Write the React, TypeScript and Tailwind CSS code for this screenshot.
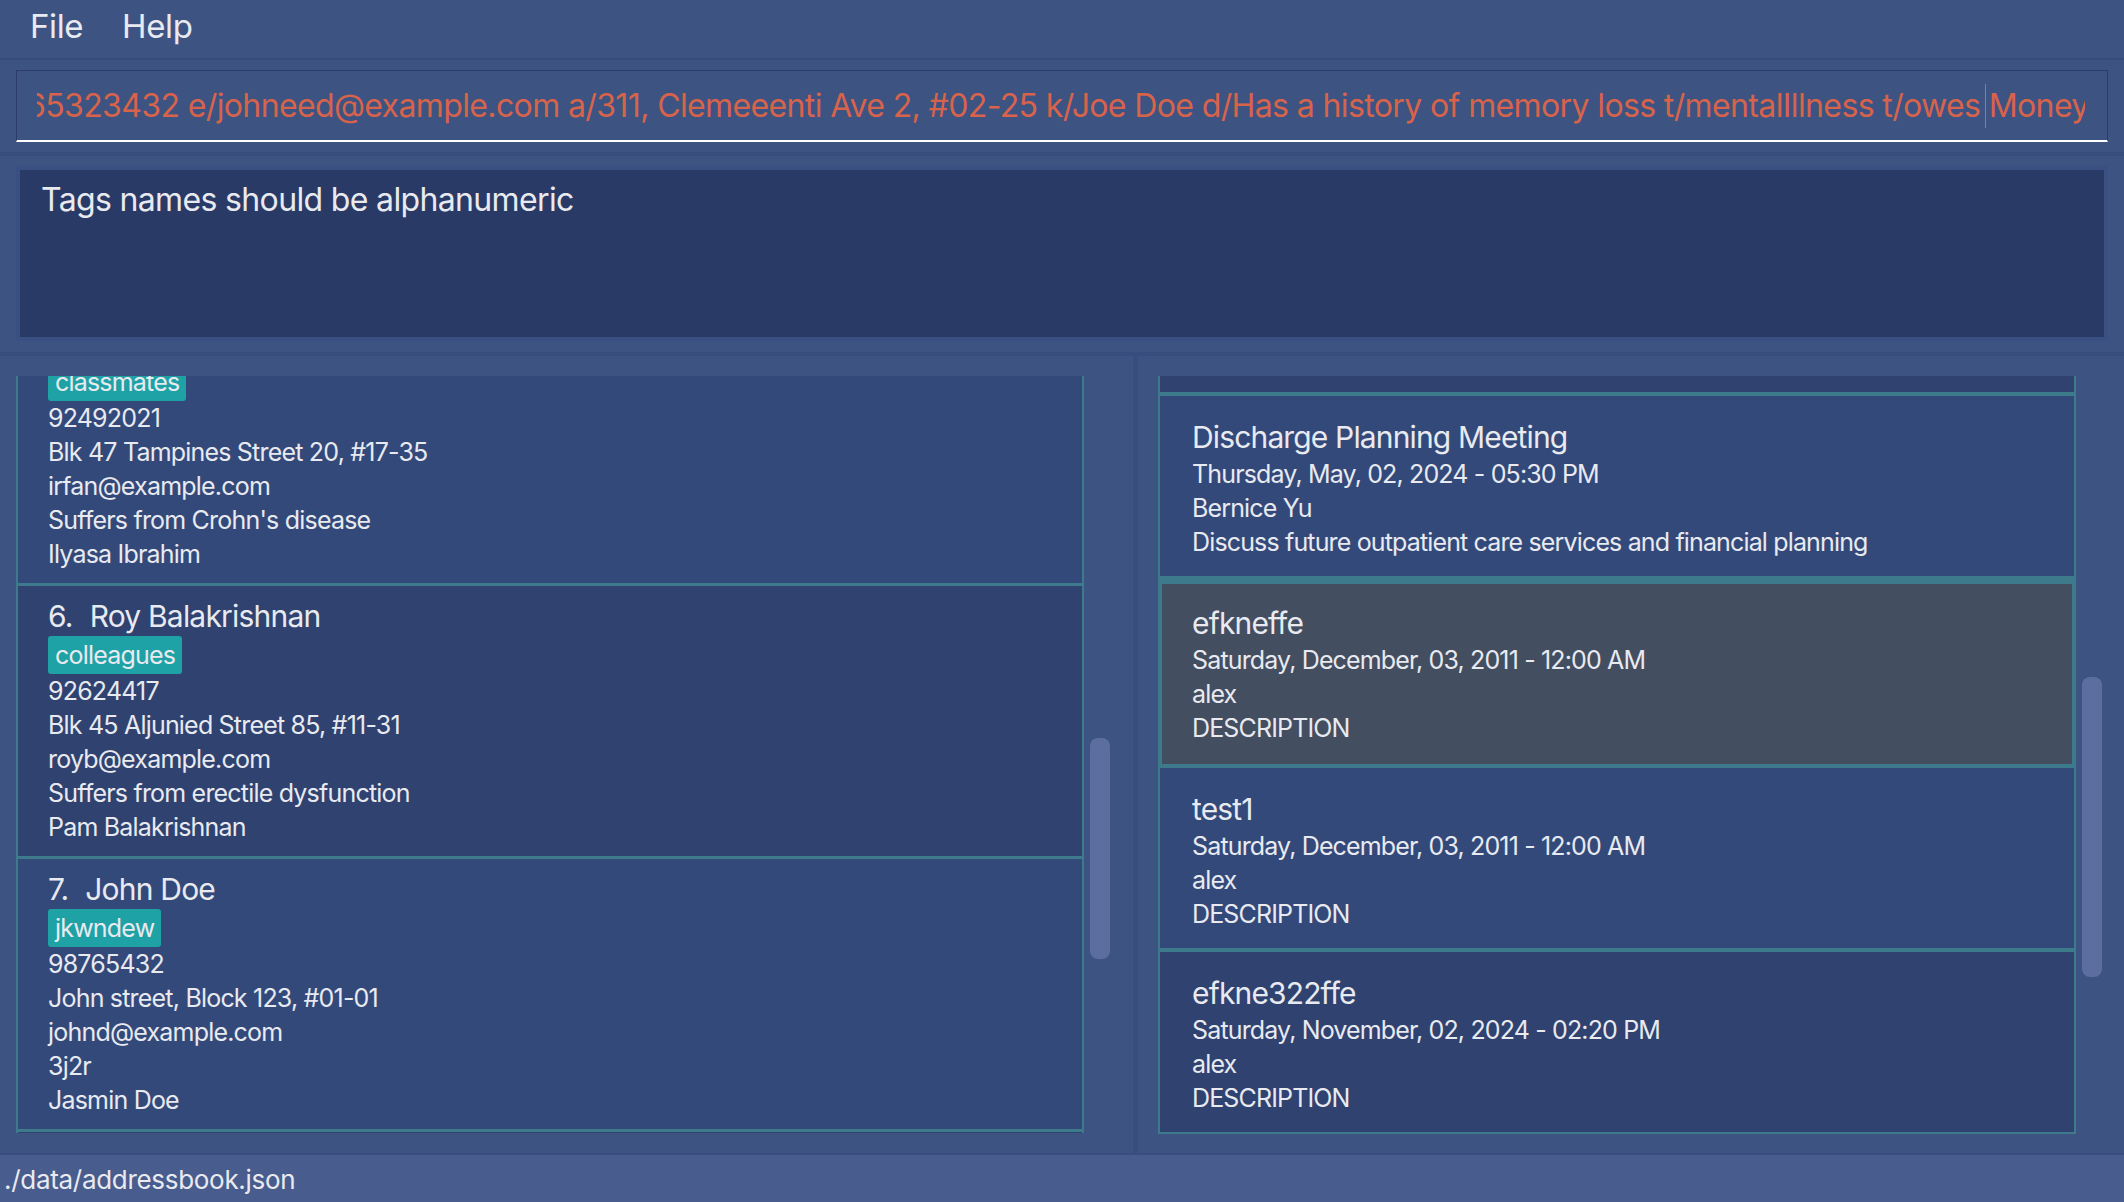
import type { ReactNode } from "react";

type Person = {
  id: number;
  name: string;
  tag: string;
  lines: string[];
};

const people: Person[] = [
  {
    id: 5,
    name: "Irfan Ibrahim",
    tag: "classmates",
    lines: [
      "92492021",
      "Blk 47 Tampines Street 20, #17-35",
      "irfan@example.com",
      "Suffers from Crohn's disease",
      "Ilyasa Ibrahim",
    ],
  },
  {
    id: 6,
    name: "Roy Balakrishnan",
    tag: "colleagues",
    lines: [
      "92624417",
      "Blk 45 Aljunied Street 85, #11-31",
      "royb@example.com",
      "Suffers from erectile dysfunction",
      "Pam Balakrishnan",
    ],
  },
  {
    id: 7,
    name: "John Doe",
    tag: "jkwndew",
    lines: ["98765432", "John street, Block 123, #01-01", "johnd@example.com", "3j2r", "Jasmin Doe"],
  },
  {
    id: 8,
    name: "Joe Doe",
    tag: "owes",
    lines: ["65323432", "311, Clementi Ave 2, #02-25", "joe@example.com", "-", "-"],
  },
];

type Appt = { title: string; when: string; who: string; note: string; selected?: boolean };

const appts: Appt[] = [
  { title: "Follow-up Consultation", when: "Monday, April, 29, 2024 - 10:00 AM", who: "Alex Yeoh", note: "Review medication" },
  {
    title: "Discharge Planning Meeting",
    when: "Thursday, May, 02, 2024 - 05:30 PM",
    who: "Bernice Yu",
    note: "Discuss future outpatient care services and financial planning",
  },
  { title: "efkneffe", when: "Saturday, December, 03, 2011 - 12:00 AM", who: "alex", note: "DESCRIPTION", selected: true },
  { title: "test1", when: "Saturday, December, 03, 2011 - 12:00 AM", who: "alex", note: "DESCRIPTION" },
  { title: "efkne322ffe", when: "Saturday, November, 02, 2024 - 02:20 PM", who: "alex", note: "DESCRIPTION" },
];

/* ── thin vertical scroll thumb ── */
function Scrollbar({ top, height }: { top: string; height: string }) {
  return (
    <div className={`w-5 shrink-0 ${top}`}>
      <div className={`w-5 rounded-lg bg-[#5b6e9f] ${height}`} />
    </div>
  );
}

function PersonCard({ p, odd }: { p: Person; odd: boolean }) {
  return (
    <div
      className={`h-[273px] shrink-0 border-x-2 border-b-[3px] border-[#3d7b8c] pl-[30px] pt-[11px] ${
        odd ? "bg-[#33497a]" : "bg-[#2f4270]"
      }`}
    >
      <div className="flex h-[39px] items-center gap-[17px] text-[30px] leading-[39px] tracking-[-0.8px]">
        <span>{p.id}.</span>
        <span>{p.name}</span>
      </div>
      <div className="flex h-[38px]">
        <span className="rounded-[3px] bg-[#1ea2a6] px-[7px] text-[25px] leading-[38px] tracking-[-0.8px]">{p.tag}</span>
      </div>
      {p.lines.map((l, i) => (
        <div key={i} className="h-[34px] text-[25px] leading-[34px] tracking-[-0.8px]">
          {l}
        </div>
      ))}
    </div>
  );
}

function ApptCard({ a, odd }: { a: Appt; odd: boolean }) {
  const box = a.selected
    ? "h-[188px] border-4 border-[#3d7b8c] bg-[#434e60] pl-[30px] pt-[19px]"
    : `h-[184px] border-x-2 border-b-4 border-[#3d7b8c] pl-8 pt-[21px] ${odd ? "bg-[#33497a]" : "bg-[#2f4270]"}`;
  return (
    <div className={`shrink-0 tracking-[-0.85px] ${box}`}>
      <div className="h-10 text-[30px] leading-10">{a.title}</div>
      <div className="h-[34px] text-[25px] leading-[34px]">{a.when}</div>
      <div className="h-[34px] text-[25px] leading-[34px]">{a.who}</div>
      <div className="h-[34px] text-[25px] leading-[34px]">{a.note}</div>
    </div>
  );
}

function Band() {
  return <div className="h-1 shrink-0 bg-[#384d7d]" />;
}

export default function App(): ReactNode {
  return (
    <div className="flex h-[1202px] w-full flex-col overflow-hidden bg-[#3d5483] font-[Inter,sans-serif] text-[#e8eaf0]">
      {/* menu bar */}
      <div className="flex h-[60px] shrink-0 items-center gap-[39px] border-b-2 border-[#374c7b] pb-1 pl-[30px] text-[33px] tracking-[-0.4px]">
        <span>File</span>
        <span>Help</span>
      </div>

      {/* command box */}
      <div className="h-[92px] shrink-0 px-4 pt-[10px]">
        <div className="flex h-[72px] items-center overflow-hidden border-x border-t border-b-2 border-[#2b3c69] border-b-white pl-5 pr-[22px]">
          <div className="flex-1 overflow-hidden">
            <div className="-ml-[11px] whitespace-nowrap text-[32px] leading-[44px] tracking-[-0.62px] text-[#d8634b]">
              65323432 e/johneed@example.com a/311, Clemeeenti Ave 2, #02-25 k/Joe Doe d/Has a history of memory
              loss t/mentalIllness t/owes{" "}
              <span className="-ml-[4px] mr-[3px] inline-block h-[44px] w-px bg-[#d8634b] align-top" />
              Money t/friend
            </div>
          </div>
        </div>
      </div>
      <Band />

      {/* result display */}
      <div className="h-[196px] shrink-0 px-4 pt-[10px]">
        <div className="h-[175px] border-4 border-[#3a5082] bg-[#2a3a66] pl-[21px] pt-[10px] text-[32px] leading-[39px] tracking-[-0.65px]">
          Tags names should be alphanumeric
        </div>
      </div>
      <Band />

      {/* lists */}
      <div className="flex h-[797px] shrink-0">
        {/* persons */}
        <div className="flex w-[1133px] shrink-0 gap-[6px] pl-4 pt-5">
          <div className="flex h-[757px] w-[1068px] shrink-0 flex-col overflow-hidden">
            <div className="-mt-[63px] flex flex-col">
              {people.map((p) => (
                <PersonCard key={p.id} p={p} odd={p.id % 2 === 1} />
              ))}
            </div>
          </div>
          <Scrollbar top="pt-[362px]" height="h-[221px]" />
        </div>

        <div className="w-[5px] shrink-0 bg-[#394e7e]" />

        {/* appointments */}
        <div className="flex flex-1 gap-[6px] pl-5 pt-5">
          <div className="flex h-[758px] w-[918px] shrink-0 flex-col overflow-hidden">
            <div className="-mt-[164px] flex flex-col">
              {appts.map((a, i) => (
                <ApptCard key={i} a={a} odd={i % 2 === 1} />
              ))}
            </div>
          </div>
          <Scrollbar top="pt-[301px]" height="h-[300px]" />
        </div>
      </div>

      {/* status bar */}
      <div className="h-[49px] shrink-0 border-t-2 border-[#3a4e7e] bg-[#485c8d] pl-1 pt-[9px] text-[26px] leading-[32px] tracking-[-0.3px]">
        ./data/addressbook.json
      </div>
    </div>
  );
}
